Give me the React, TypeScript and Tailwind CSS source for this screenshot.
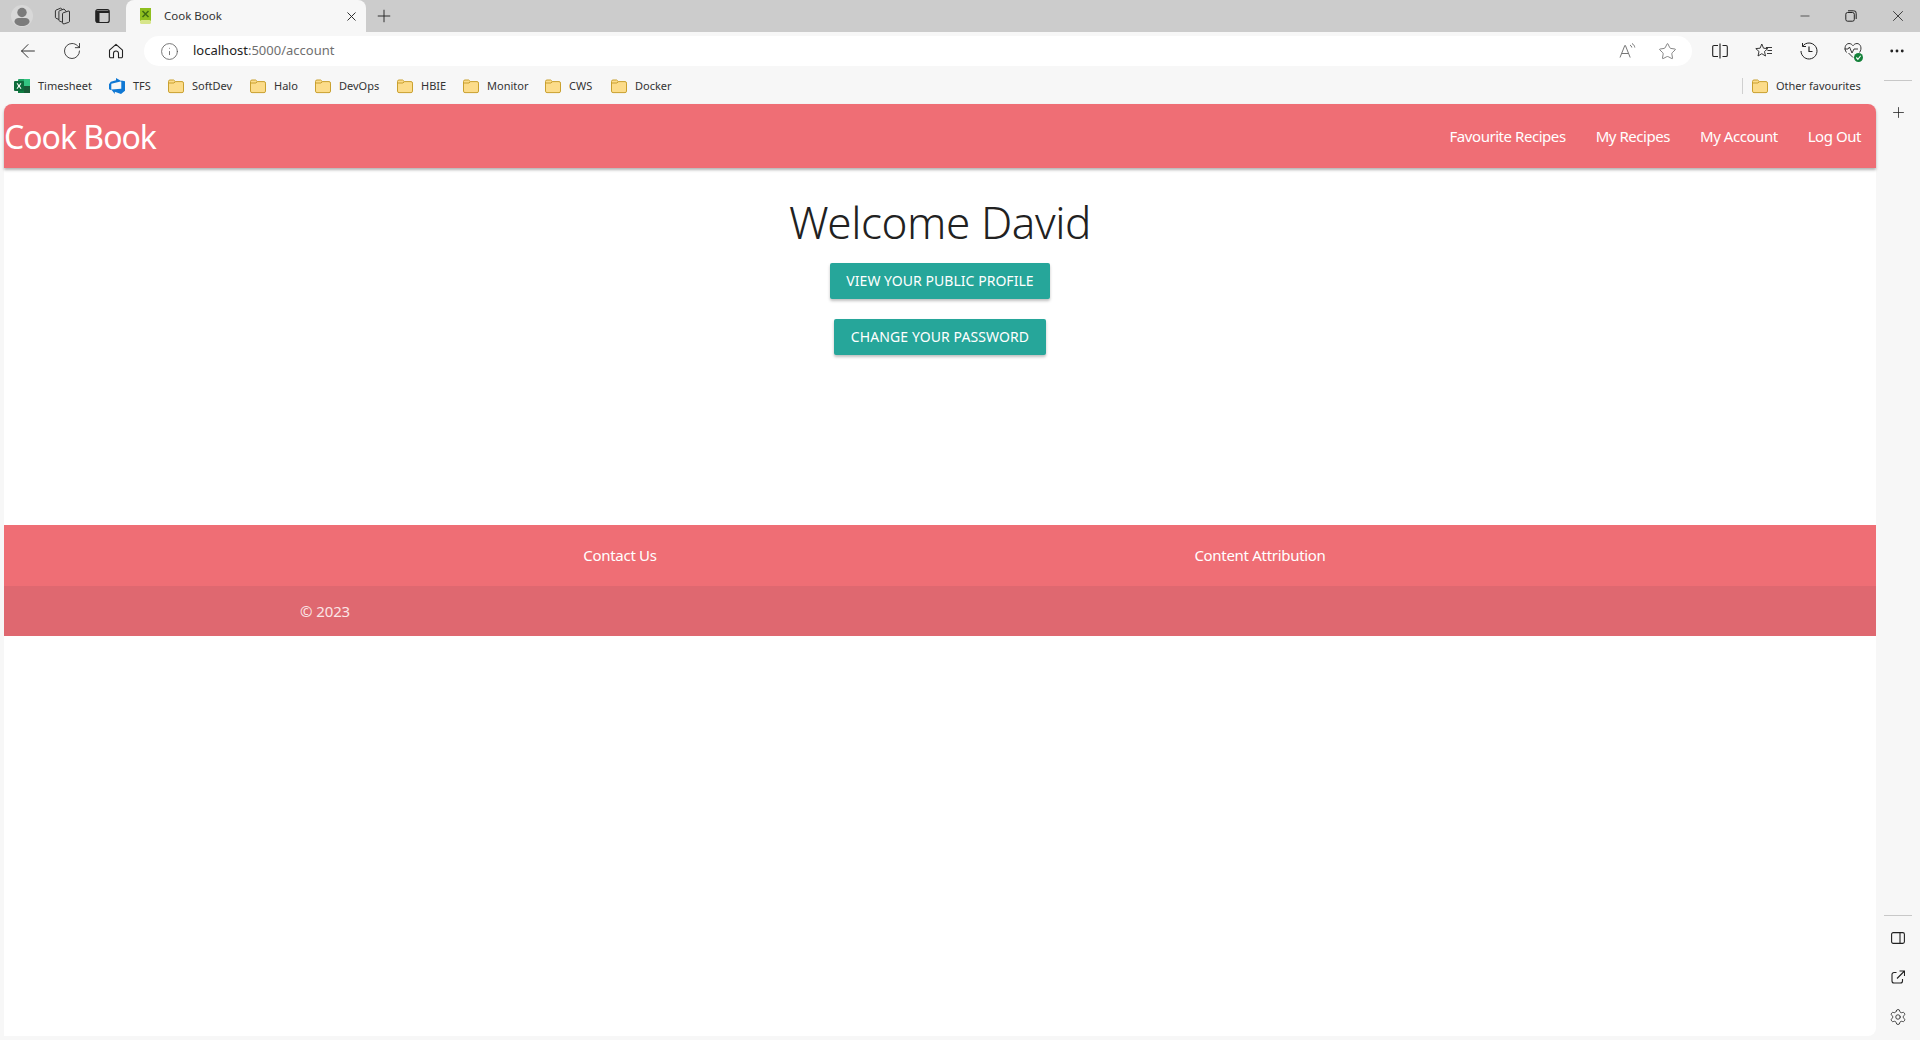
import React from "react";
import { ArrowLeft, RotateCw, Info, X, Plus, Minus, Star, MoreHorizontal, Settings } from "lucide-react";

const Folder = () => (
  <svg width="16" height="16" viewBox="0 0 16 16" className="shrink-0">
    <path d="M.5 3.500a1.500 1.500 0 0 1 1.500-1.500h3.600l1.700 1.600h6.700a1.500 1.500 0 0 1 1.500 1.500v8a1.500 1.500 0 0 1-1.500 1.500H2a1.500 1.500 0 0 1-1.500-1.500z" fill="#fcdc8a" stroke="#c9a02f" />
    <path d="M.8 5h5.200l1.300-1.400" fill="none" stroke="#c9a02f" />
  </svg>
);

const Excel = () => (
  <svg width="16" height="16" viewBox="0 0 16 16" className="shrink-0">
    <rect x="4" y="1" width="12" height="14" rx="1" fill="#21a366" />
    <rect x="10" y="1" width="6" height="7" fill="#33c481" />
    <rect x="4" y="8" width="6" height="7" fill="#107c41" />
    <rect x="10" y="8" width="6" height="7" fill="#185c37" />
    <rect x="0" y="3" width="10" height="10" rx="1" fill="#0d6b3b" />
    <path d="M2.600 5.200 4.200 8 2.500 10.800h1.200L5 8.800l1.300 2h1.200L5.800 8l1.600-2.800H6.300L5 7.200 3.800 5.200z" fill="#fff" />
  </svg>
);

const Tfs = () => (
  <svg width="16" height="16" viewBox="0 0 16 16" className="shrink-0">
    <path d="M16 3.200v9.600l-4 3.200-6.200-2.200V16L2.300 11.600l10-.8V2.600zM12.600 3.200 7 0v2.300L1.800 3.800 0 6.200v5l2.300 1V5.800z" fill="#0f78d4" />
  </svg>
);

const Profile = () => (
  <svg width="22" height="22" viewBox="0 0 22 22">
    <circle cx="11" cy="11" r="11" fill="#d8d8d8" />
    <circle cx="11" cy="7.500" r="4.700" fill="#7b7b7b" />
    <path d="M3.500 16.500c0-2 2-3.400 4-3.400h7c2 0 4 1.400 4 3.400 0 2.500-3.500 4.500-7.500 4.500s-7.500-2-7.500-4.500z" fill="#7b7b7b" />
  </svg>
);

const Workspaces = () => (
  <svg width="18" height="18" viewBox="0 0 18 18" fill="none" stroke="#333" strokeWidth="1">
    <path d="M9.500 6.800a1 1 0 0 1 .6-.9l5-1.800a1 1 0 0 1 1.400.9v9.400a1 1 0 0 1-.7.9l-4.600 1.500a1.300 1.300 0 0 1-1.700-1.200z" />
    <path d="M9.500 15.300 6.500 14a1 1 0 0 1-.6-.9V4.600a1 1 0 0 1 .6-.9L11 2l2.500 2.800" />
    <path d="M5.900 12.500 3 11.200a1 1 0 0 1-.6-.9V4a1 1 0 0 1 .6-.9L7.500 1.200 10 2.800" />
  </svg>
);

const VerticalTabs = () => (
  <svg width="16" height="16" viewBox="0 0 16 16" fill="none">
    <rect x=".8" y="1.500" width="13.400" height="13" rx="2" stroke="#222" strokeWidth="1.200" />
    <path d="M1 2.500h13v2.500H4.500v9.500H1z" fill="#222" />
  </svg>
);

const HomeIcon = () => (
  <svg width="16" height="16" viewBox="0 0 16 16" fill="none" stroke="#222" strokeWidth="1.100" strokeLinejoin="round">
    <path d="M1.500 7.200 8 1.300l6.500 5.900v6.300a1.200 1.200 0 0 1-1.200 1.200H10.500V10.500a2.500 2.500 0 0 0-5 0v4.200H2.700a1.200 1.200 0 0 1-1.200-1.200z" />
  </svg>
);

const ReadAloud = () => (
  <svg width="18" height="18" viewBox="0 0 18 18" fill="none" stroke="#777" strokeWidth="1">
    <path d="M1 15.500 5.800 3.500h.6l4.800 12M2.800 11.500h6.700" />
    <path d="M11 3c1 .5 1.600 1.300 1.800 2.500M13 1.500c1.600.9 2.500 2.300 2.800 4" />
  </svg>
);

const Split = () => (
  <svg width="16" height="16" viewBox="0 0 16 16" fill="none" stroke="#222" strokeWidth="1.100">
    <path d="M6 2.500H2a1.300 1.300 0 0 0-1.300 1.300v8.400A1.300 1.300 0 0 0 2 13.500h4M10.500 2.500H14a1.300 1.300 0 0 1 1.300 1.300v8.400a1.300 1.300 0 0 1-1.300 1.300h-3.500" />
    <path d="M8 .5v15" stroke="#555" strokeWidth="1.500" />
  </svg>
);

const FavList = () => (
  <svg width="18" height="18" viewBox="0 0 18 18" fill="none" stroke="#222" strokeWidth="0.900" strokeLinejoin="round">
    <path d="M6.800 2 8.500 6.200l4.300.4-3.300 2.900 1 4.500-3.700-2.300L3 14l1-4.500L.8 6.600l4.300-.4z" />
    <path d="M11 5.500h6M12.500 8.500h4.500M12 11.500h5" />
  </svg>
);

const HistoryIcon = () => (
  <svg width="18" height="18" viewBox="0 0 18 18" fill="none" stroke="#222" strokeWidth="1">
    <path d="M2.600 4.200A8 8 0 1 1 1 9" />
    <path d="M2.500 1v3.500H6" />
    <path d="M9 4.500V9.500h3.500" strokeWidth="1.200" />
  </svg>
);

const Health = () => (
  <span className="relative inline-flex h-[18px] w-[18px]">
    <svg width="18" height="18" viewBox="0 0 18 18" fill="none" stroke="#222" strokeWidth="0.900">
      <path d="M2.500 10.500C-.5 6.500 1.500 1.500 5 1.500c1.800 0 3 1 4 2.200 1-1.200 2.200-2.200 4-2.200 3.500 0 5.500 5 2.500 9" />
      <path d="M.5 7h3.500l1.500-2 2.500 6 2-4h4" />
      <path d="M4.500 11 9 15.500" />
    </svg>
    <span className="absolute bottom-[-2px] right-[-1px] flex h-[9px] w-[9px] items-center justify-center rounded-full bg-[#14813a]">
      <svg width="7" height="7" viewBox="0 0 8 8" fill="none" stroke="#fff" strokeWidth="1.300"><path d="M1.500 4 3.300 6 6.500 2" /></svg>
    </span>
  </span>
);

const PanelIcon = () => (
  <svg width="14" height="12" viewBox="0 0 14 12" fill="none" stroke="#222" strokeWidth="1.100">
    <rect x=".6" y=".6" width="12.800" height="10.800" rx="1.600" />
    <path d="M9 .6v10.800" />
  </svg>
);

const ShareOut = () => (
  <svg width="14" height="14" viewBox="0 0 14 14" fill="none" stroke="#222" strokeWidth="1.100">
    <path d="M5.500 2.500H3A2 2 0 0 0 1 4.500v6.500a2 2 0 0 0 2 2h6.500a2 2 0 0 0 2-2V9" />
    <path d="M6 8.500 13 1.500M8.500 1h5v5" />
  </svg>
);

const Favicon = () => (
  <svg width="16" height="16" viewBox="0 0 16 16" className="shrink-0">
    <rect x="2" y="0" width="11" height="13" fill="#8fbf1f" />
    <rect x="2" y="12" width="11" height="4" rx="1.500" fill="#d7e58a" />
    <path d="M4.500 3 10.500 9M10.500 3 4.500 9" stroke="#3e6b12" strokeWidth="1.500" />
  </svg>
);

const bookmarks: [string, string, React.ReactNode][] = [
  ["Timesheet", "w-[54px]", <Excel />],
  ["TFS", "w-[18px]", <Tfs />],
  ["SoftDev", "w-[41px]", <Folder />],
  ["Halo", "w-[24px]", <Folder />],
  ["DevOps", "w-[41px]", <Folder />],
  ["HBIE", "w-[25px]", <Folder />],
  ["Monitor", "w-[41px]", <Folder />],
  ["CWS", "w-[25px]", <Folder />],
  ["Docker", "w-[37px]", <Folder />],
];

const font = { fontFamily: '"Noto Sans", "Open Sans", sans-serif' };

export default function App() {
  return (
    <div className="flex h-[1040px] w-[1920px] flex-col overflow-hidden bg-[#f7f7f7]" style={font}>
      {/* tab strip */}
      <div className="flex h-8 items-center bg-[#cccccc]">
        <div className="ml-[11px] flex w-[22px] justify-center"><Profile /></div>
        <div className="ml-[20px] flex w-[18px]"><Workspaces /></div>
        <div className="ml-[24px] flex w-4"><VerticalTabs /></div>
        <div className="ml-[15px] flex h-8 w-[240px] items-center rounded-t-lg bg-[#f7f7f7] pl-[12px] pr-[7px]">
          <Favicon />
          <span className="ml-[10px] flex-1 text-[11.500px] text-[#333]">Cook Book</span>
          <X size={15} strokeWidth={1.500} color="#222" />
        </div>
        <div className="ml-[8px] flex"><Plus size={20} strokeWidth={1.100} color="#222" /></div>
        <div className="flex-1" />
        <Minus size={14} strokeWidth={1.200} color="#222" />
        <svg className="ml-[33px]" width="12" height="12" viewBox="0 0 12 12" fill="none" stroke="#222" strokeWidth="1">
          <rect x=".8" y="2.500" width="8.500" height="8.700" rx="1.800" />
          <path d="M3 .8h5.500a2.500 2.500 0 0 1 2.700 2.700v5.500" />
        </svg>
        <X className="ml-[32px] mr-[13px]" size={18} strokeWidth={1.100} color="#222" />
      </div>

      {/* toolbar */}
      <div className="flex h-[38px] items-center">
        <ArrowLeft className="ml-[17px]" size={22} strokeWidth={1} color="#222" />
        <RotateCw className="ml-[23px]" size={20} strokeWidth={1} color="#222" />
        <div className="ml-[26px] flex"><HomeIcon /></div>
        <div className="ml-[20px] flex h-[30px] w-[1548px] items-center rounded-full bg-white pl-[16px] pr-[15px]">
          <Info size={19} strokeWidth={1} color="#555" />
          <span className="ml-[14px] flex-1 text-[13px] text-[#222]">localhost<span className="text-[#6f6f6f]">:5000/account</span></span>
          <ReadAloud />
          <Star className="ml-[21px]" size={19} strokeWidth={1} color="#666" />
        </div>
        <div className="ml-[20px] flex"><Split /></div>
        <div className="ml-[27px] flex"><FavList /></div>
        <div className="ml-[27px] flex"><HistoryIcon /></div>
        <div className="ml-[26px] flex"><Health /></div>
        <MoreHorizontal className="ml-[26px]" size={18} strokeWidth={1.800} color="#222" />
      </div>

      {/* bookmarks */}
      <div className="flex h-[34px] items-center pb-[2px] pl-[14px]">
        {bookmarks.map(([label, w, icon]) => (
          <div key={label} className="mr-[17px] flex items-center gap-2">
            {icon}
            <span className={`${w} whitespace-nowrap text-[11px] text-[#333]`}>{label}</span>
          </div>
        ))}
        <div className="flex-1" />
        <div className="h-4 w-px bg-[#d0d0d0]" />
        <div className="ml-[9px] flex items-center gap-2"><Folder /><span className="w-[85px] whitespace-nowrap text-[11px] text-[#333]">Other favourites</span></div>
        <div className="w-[59px]" />
      </div>

      <div className="flex flex-1 min-h-0">
        <div className="flex-1 min-w-0 pl-1 pb-1">
          <div className="flex h-full flex-col rounded-t-lg rounded-br-lg bg-white">
            {/* navbar */}
            <nav className="flex h-16 items-center rounded-t-lg bg-[#ef6e75] shadow-[0_2px_3px_rgba(0,0,0,0.3)]">
              <span className="flex-1 pt-px text-[32px] leading-none tracking-[-1px] text-white">Cook Book</span>
              <span className="text-[15px] tracking-[-0.45px] text-white">Favourite Recipes</span>
              <span className="ml-[30px] text-[15px] tracking-[-0.45px] text-white">My Recipes</span>
              <span className="ml-[30px] text-[15px] tracking-[-0.45px] text-white">My Account</span>
              <span className="ml-[30px] mr-[15px] text-[15px] tracking-[-0.45px] text-white">Log Out</span>
            </nav>

            {/* main */}
            <main className="flex h-[357px] flex-col items-center">
              <h1 className="mt-[24px] h-[71px] text-[44px] font-light leading-[60px] tracking-[-0.4px] text-[#212121]">Welcome David</h1>
              <a className="flex h-9 w-[220px] items-center justify-center rounded-[2px] bg-[#26a69a] pb-0.5 text-[14px] tracking-[0.040px] text-white shadow-[0_2px_3px_rgba(0,0,0,0.25)]">VIEW YOUR PUBLIC PROFILE</a>
              <a className="mt-5 flex h-9 w-[212px] items-center justify-center rounded-[2px] bg-[#26a69a] pb-0.5 text-[14px] tracking-[0.1px] text-white shadow-[0_2px_3px_rgba(0,0,0,0.25)]">CHANGE YOUR PASSWORD</a>
            </main>

            {/* footer */}
            <footer className="flex h-[61px] items-center justify-center bg-[#ef6e75] text-[15px] tracking-[-0.3px] text-white">
              <span className="w-[640px] text-center">Contact Us</span>
              <span className="w-[640px] text-center">Content Attribution</span>
            </footer>
            <div className="flex h-[50px] items-center bg-[#df6870] pl-[296px] text-[15px] tracking-[-0.1px] text-[#fbe5e6]">© 2023</div>
          </div>
        </div>

        {/* edge sidebar */}
        <aside className="flex w-[44px] flex-col items-center">
          <div className="mt-[-24px] h-px w-7 bg-[#c8c8c8]" />
          <Plus className="mt-[23px]" size={17} strokeWidth={1.100} color="#222" />
          <div className="flex-1" />
          <div className="h-px w-7 bg-[#c8c8c8]" />
          <div className="mt-[16px] flex"><PanelIcon /></div>
          <div className="mt-[26px] flex"><ShareOut /></div>
          <Settings className="mb-[14px] mt-[24px]" size={18} strokeWidth={1.100} color="#222" />
        </aside>
      </div>
    </div>
  );
}
